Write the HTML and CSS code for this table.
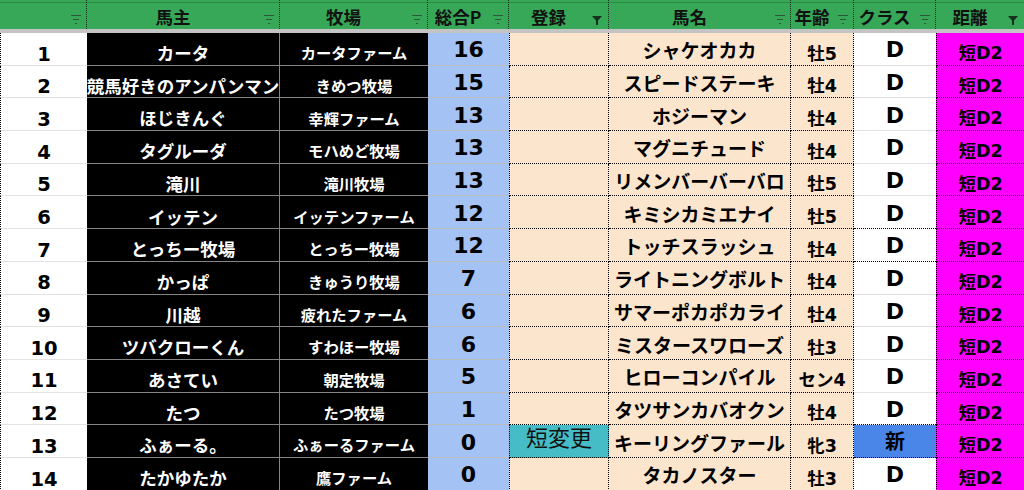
FILE: index.html
```html
<!DOCTYPE html>
<html lang="ja">
<head>
<meta charset="utf-8">
<title>ランキング</title>
<link rel="stylesheet" href="styles.css">
</head>
<body>
<div class="sheet">
  <div class="head">
    <div class="hc"><svg class="fi" viewBox="0 0 10 9"><path d="M0 .5h10M2 4.5h6M4 8.5h2"/></svg></div>
    <div class="hc">馬主<svg class="fi" viewBox="0 0 10 9"><path d="M0 .5h10M2 4.5h6M4 8.5h2"/></svg></div>
    <div class="hc">牧場<svg class="fi" viewBox="0 0 10 9"><path d="M0 .5h10M2 4.5h6M4 8.5h2"/></svg></div>
    <div class="hc">総合P<svg class="fi" viewBox="0 0 10 9"><path d="M0 .5h10M2 4.5h6M4 8.5h2"/></svg></div>
    <div class="hc">登録<svg class="fa" viewBox="0 0 10 9"><path d="M0 0H10L6 4.5V9H4V4.5Z"/></svg></div>
    <div class="hc">馬名<svg class="fi" viewBox="0 0 10 9"><path d="M0 .5h10M2 4.5h6M4 8.5h2"/></svg></div>
    <div class="hc">年齢<svg class="fi" viewBox="0 0 10 9"><path d="M0 .5h10M2 4.5h6M4 8.5h2"/></svg></div>
    <div class="hc">クラス<svg class="fi" viewBox="0 0 10 9"><path d="M0 .5h10M2 4.5h6M4 8.5h2"/></svg></div>
    <div class="hc">距離<svg class="fa" viewBox="0 0 10 9"><path d="M0 0H10L6 4.5V9H4V4.5Z"/></svg></div>
  </div>
  <div class="band"></div>
  <div class="body">
    <div class="c num">1</div><div class="c owner">カータ</div><div class="c farm">カータファーム</div><div class="c pts">16</div><div class="c reg"></div><div class="c horse">シャケオカカ</div><div class="c age">牡5</div><div class="c cls">D</div><div class="c dist">短D2</div>
    <div class="c num">2</div><div class="c owner">競馬好きのアンパンマン</div><div class="c farm">きめつ牧場</div><div class="c pts">15</div><div class="c reg"></div><div class="c horse">スピードステーキ</div><div class="c age">牡4</div><div class="c cls">D</div><div class="c dist">短D2</div>
    <div class="c num">3</div><div class="c owner">ほじきんぐ</div><div class="c farm">幸輝ファーム</div><div class="c pts">13</div><div class="c reg"></div><div class="c horse">ホジーマン</div><div class="c age">牡4</div><div class="c cls">D</div><div class="c dist">短D2</div>
    <div class="c num">4</div><div class="c owner">タグルーダ</div><div class="c farm">モハめど牧場</div><div class="c pts">13</div><div class="c reg"></div><div class="c horse">マグニチュード</div><div class="c age">牡4</div><div class="c cls">D</div><div class="c dist">短D2</div>
    <div class="c num">5</div><div class="c owner">滝川</div><div class="c farm">滝川牧場</div><div class="c pts">13</div><div class="c reg"></div><div class="c horse">リメンバーバーバロ</div><div class="c age">牡5</div><div class="c cls">D</div><div class="c dist">短D2</div>
    <div class="c num">6</div><div class="c owner">イッテン</div><div class="c farm">イッテンファーム</div><div class="c pts">12</div><div class="c reg"></div><div class="c horse">キミシカミエナイ</div><div class="c age">牡5</div><div class="c cls dot">D</div><div class="c dist">短D2</div>
    <div class="c num">7</div><div class="c owner">とっちー牧場</div><div class="c farm">とっちー牧場</div><div class="c pts">12</div><div class="c reg"></div><div class="c horse">トッチスラッシュ</div><div class="c age">牡4</div><div class="c cls dot">D</div><div class="c dist">短D2</div>
    <div class="c num">8</div><div class="c owner">かっぱ</div><div class="c farm">きゅうり牧場</div><div class="c pts">7</div><div class="c reg"></div><div class="c horse">ライトニングボルト</div><div class="c age">牡4</div><div class="c cls">D</div><div class="c dist">短D2</div>
    <div class="c num">9</div><div class="c owner">川越</div><div class="c farm">疲れたファーム</div><div class="c pts">6</div><div class="c reg"></div><div class="c horse">サマーポカポカライ</div><div class="c age">牡4</div><div class="c cls">D</div><div class="c dist">短D2</div>
    <div class="c num">10</div><div class="c owner">ツバクローくん</div><div class="c farm">すわほー牧場</div><div class="c pts">6</div><div class="c reg"></div><div class="c horse">ミスタースワローズ</div><div class="c age">牡3</div><div class="c cls">D</div><div class="c dist">短D2</div>
    <div class="c num">11</div><div class="c owner">あさてい</div><div class="c farm">朝定牧場</div><div class="c pts">5</div><div class="c reg"></div><div class="c horse">ヒローコンパイル</div><div class="c age">セン4</div><div class="c cls">D</div><div class="c dist">短D2</div>
    <div class="c num">12</div><div class="c owner">たつ</div><div class="c farm">たつ牧場</div><div class="c pts">1</div><div class="c reg"></div><div class="c horse">タツサンカバオクン</div><div class="c age">牡4</div><div class="c cls dot">D</div><div class="c dist">短D2</div>
    <div class="c num">13</div><div class="c owner">ふぁーる。</div><div class="c farm">ふぁーるファーム</div><div class="c pts">0</div><div class="c reg chg">短変更</div><div class="c horse">キーリングファール</div><div class="c age">牝3</div><div class="c cls new dot">新</div><div class="c dist">短D2</div>
    <div class="c num">14</div><div class="c owner">たかゆたか</div><div class="c farm">鷹ファーム</div><div class="c pts">0</div><div class="c reg"></div><div class="c horse">タカノスター</div><div class="c age">牡3</div><div class="c cls">D</div><div class="c dist">短D2</div>
  </div>
</div>
</body>
</html>
```

FILE: styles.css
```css
html, body {
  margin: 0;
  padding: 0;
  background: #ffffff;
}

body {
  font-family: "DejaVu Sans", "Noto Sans CJK JP", sans-serif;
  font-weight: bold;
  color: #000;
}

.sheet {
  width: 1024px;
  height: 490px;
  overflow: hidden;
}

.head,
.body {
  display: grid;
  grid-template-columns: 87px 193px 148px 81px 100px 182px 63px 82px 88px;
}

.head {
  height: 29px;
  border-bottom: 1px solid #2e3a31;
  box-sizing: border-box;
}

.hc {
  position: relative;
  display: flex;
  align-items: center;
  justify-content: center;
  padding: 4px 20px 0 0;
  box-sizing: border-box;
  background: linear-gradient(to bottom, #36a857 0 2px, #2a8845 2px 3px, #36a857 3px);
  border-right: 1px dotted #1a2a1e;
  font-family: "Noto Sans CJK JP", sans-serif;
  font-size: 17.5px;
  color: #111;
  white-space: nowrap;
}

.hc:last-child {
  border-right: none;
}

.fi,
.fa {
  position: absolute;
  right: 5px;
  top: 15px;
  width: 10px;
  height: 9px;
}

.fi path {
  stroke: #2c5a38;
  stroke-width: 1;
  fill: none;
}

.fa {
  right: 6px;
  top: 16px;
}

.fa path {
  fill: #15301d;
}

.band {
  height: 4px;
  background: #c4c4c4;
}

.body {
  grid-auto-rows: 32.7px;
}

.c {
  display: flex;
  align-items: center;
  justify-content: center;
  box-sizing: border-box;
  overflow: hidden;
  white-space: nowrap;
  line-height: 1;
  padding-top: 2px;
}

.num {
  background: #fff;
  border-left: 1px dotted #000;
  border-bottom: 1px solid #e3e3e3;
  font-size: 19.5px;
  padding-top: 11px;
}

.owner {
  background: #000;
  color: #fff;
  font-size: 17.5px;
  border-right: 1px solid #858585;
  border-bottom: 1px solid #858585;
  padding-top: 12px;
}

.farm {
  background: #000;
  color: #fff;
  font-size: 15.3px;
  border-bottom: 1px solid #858585;
  padding-top: 12px;
}

.pts {
  background: #a4c2f4;
  border-bottom: 1px solid #bcbcbc;
  font-size: 22px;
  padding-top: 3px;
}

.reg {
  background: #fce5cd;
  border-left: 1px dotted #000;
  border-right: 1px dotted #000;
  border-bottom: 1px dotted #000;
}

.reg.chg {
  background: #46bdc6;
  font-weight: normal;
  font-size: 22px;
  color: #111;
  padding-top: 0;
  padding-bottom: 4px;
}

.horse {
  background: #fce5cd;
  border-right: 1px dotted #000;
  border-bottom: 1px dotted #000;
  font-size: 19px;
  padding-top: 6px;
}

.age {
  background: #fce5cd;
  border-right: 1px dotted #000;
  border-bottom: 1px dotted #000;
  font-size: 17.5px;
  padding-top: 11px;
}

.cls {
  background: #fff;
  border-bottom: 1px solid #e3e3e3;
  font-size: 22px;
  padding-top: 3px;
}

.cls.dot {
  border-bottom: 1px dotted #000;
}

.cls.new {
  background: #4a86e8;
  font-size: 20px;
  line-height: 1.45;
  font-family: "Noto Sans CJK JP", sans-serif;
  padding-top: 0;
  padding-bottom: 2px;
}

.dist {
  background: #ff00ff;
  border-left: 1px dotted #000;
  border-bottom: 1px dotted #000;
  font-size: 17.5px;
  padding-top: 10px;
}
```
